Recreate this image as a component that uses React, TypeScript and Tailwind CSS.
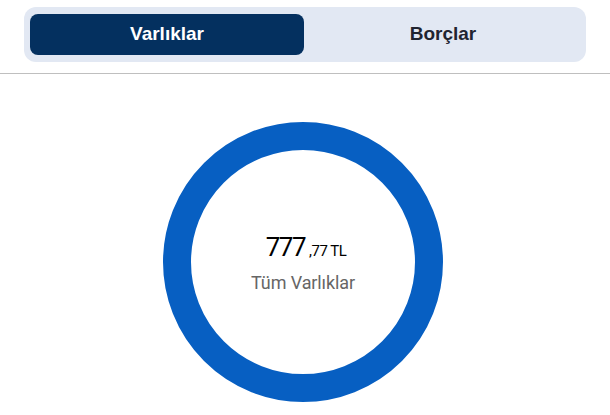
import { useState } from "react";

export default function App() {
  const [tab, setTab] = useState<"assets" | "debts">("assets");

  const tabs = [
    { key: "assets" as const, label: "Varlıklar" },
    { key: "debts" as const, label: "Borçlar" },
  ];

  return (
    <div className="w-[610px] h-[415px] bg-white overflow-hidden font-['Roboto',sans-serif]">
      <div className="px-6 pt-[7px] pb-[11px] border-b border-[#bfbfbf]">
        <div className="grid grid-cols-2 gap-[2px] p-[6px] pt-[7px] pb-[7px] rounded-[12px] bg-[#e2e8f3]">
          {tabs.map(({ key, label }) => (
            <button
              key={key}
              onClick={() => setTab(key)}
              className={
                tab === key
                  ? "h-[41px] rounded-[8px] bg-[#04305f] text-white text-[19px] font-bold font-['Liberation_Sans',sans-serif]"
                  : "h-[41px] rounded-[8px] text-[#1f2430] text-[19px] font-bold font-['Liberation_Sans',sans-serif]"
              }
            >
              {label}
            </button>
          ))}
        </div>
      </div>

      <div className="flex justify-center pt-[48px] pr-[4px]">
        <div className="w-[280px] h-[280px] rounded-full border-[28px] border-[#075fc2] flex flex-col items-center justify-center">
          <div className="flex items-baseline text-black pl-[6px] mt-[2px]">
            <span className="text-[26px] font-normal tracking-[-1.5px] leading-none">777</span>
            <span className="text-[15px] ml-[4px] leading-none tracking-[-0.5px]">,77 TL</span>
          </div>
          <div className="mt-[14px] text-[18px] text-[#666666] leading-none tracking-[-0.1px]">
            Tüm Varlıklar
          </div>
        </div>
      </div>
    </div>
  );
}
